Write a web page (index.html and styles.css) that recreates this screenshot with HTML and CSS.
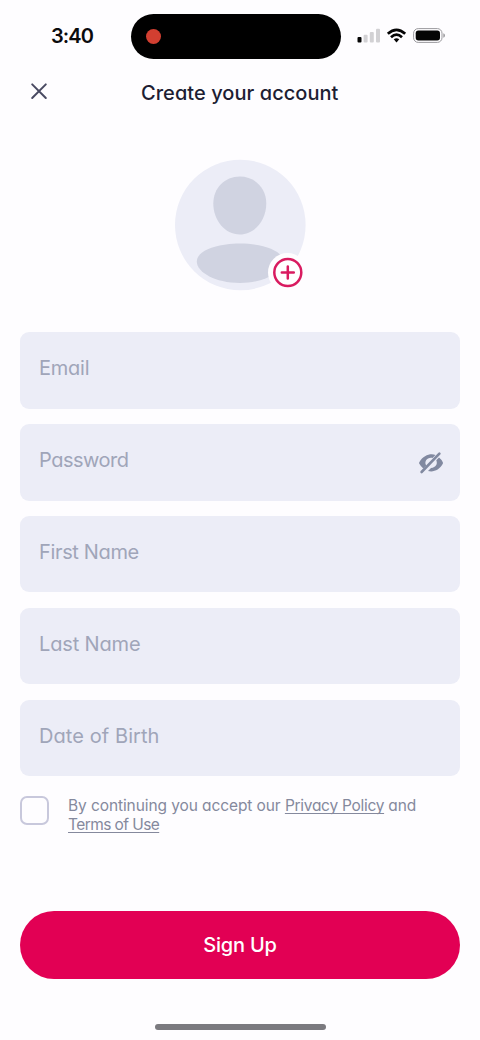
FILE: index.html
```html
<!DOCTYPE html>
<html lang="en">
<head>
<meta charset="utf-8">
<title>Create your account</title>
<link rel="stylesheet" href="styles.css">
</head>
<body>
<div class="screen">
  <div class="status">
    <div class="time"><span>3:40</span></div>
    <div class="island"><i class="rec"></i></div>
    <svg class="indicators" width="90" height="18" viewBox="0 0 90 18">
      <rect x="0.5" y="10" width="4" height="5.6" rx="1" fill="#050505"/>
      <g fill="#d2d1d4"><rect x="6.6" y="7.8" width="4" height="7.8" rx="1"/><rect x="12.8" y="5" width="4" height="10.6" rx="1"/><rect x="19" y="1.8" width="4" height="13.8" rx="1"/></g>
      <g fill="none" stroke="#050505" stroke-width="2.7">
        <path d="M30.8 6.8Q39.5-1.1 48.2 6.8"/>
        <path d="M34 10.2Q39.5 5.2 45 10.2"/>
      </g>
      <path d="M36.7 12.3Q39.5 10 42.3 12.3L39.5 15.5Z" fill="#050505"/>
      <rect x="56.6" y="1.6" width="28.4" height="13.8" rx="4.6" fill="none" stroke="#9b9a9e"/>
      <rect x="58.7" y="3.5" width="24.3" height="10" rx="2.7" fill="#050505"/>
      <path d="M86.3 6.2q1.7.6 1.7 2.3t-1.7 2.3z" fill="#9b9a9e"/>
    </svg>
  </div>

  <header class="header">
    <svg class="close" width="18" height="18" viewBox="0 0 18 18"><path d="M2.2 2.4 15.8 16M15.8 2.4 2.2 16" fill="none" stroke="#494a62" stroke-width="2" stroke-linecap="round"/></svg>
    <h1 class="title"><span>Create your account</span></h1>
  </header>

  <div class="avatar">
    <svg width="132" height="132" viewBox="0 0 132 132">
      <circle cx="66.3" cy="66" r="65.3" fill="#ecedf7"/>
      <path d="M65.800 17.500C80.800 17.500 92.300 29 92.300 44.500C92.300 61 80.800 75.500 65.800 75.500S39.300 61 39.300 44.500C39.300 29 50.800 17.500 65.800 17.500Z" fill="#d0d3e1"/>
      <path d="M22.800 102.500C22.800 92 42 84.500 66 84.500S109.500 92 109.500 103C109.500 112 91 124 66 124S22.800 113 22.800 102.500Z" fill="#d0d3e1"/>
      <circle cx="113.5" cy="113.500" r="19.500" fill="#fefdff"/>
      <circle cx="113.800" cy="113.500" r="13.500" fill="#fff" stroke="#d91b60" stroke-width="2.500"/>
      <path d="M107.800 113.500h12M113.800 107.500v12" stroke="#d91b60" stroke-width="2.500" stroke-linecap="round"/>
    </svg>
  </div>

  <form class="form">
    <div class="field"><span class="email">Email</span></div>
    <div class="field"><span class="password">Password</span>
      <svg class="eye" width="26" height="24" viewBox="0 0 26 24">
        <path d="M17.500 3.900C12 2.200 5.500 4.300 1.300 11.200q-.5.800 0 1.600 1.600 2.800 4 4.700L8.200 14.600C5.800 10.500 9.200 6 14.500 7Z" fill="#8189a0"/>
        <path d="M21 6.600q2.300 1.800 3.800 4.600.4.800 0 1.600C21.500 19 15.800 21.400 10 20l3-3C18 16.600 19.800 13 18.300 9.300Z" fill="#8189a0"/>
        <path d="M3.600 21 21.400 2.600" stroke="#8189a0" stroke-width="2.600" stroke-linecap="round"/>
      </svg>
    </div>
    <div class="field"><span class="first">First Name</span></div>
    <div class="field"><span class="last">Last Name</span></div>
    <div class="field"><span class="dob">Date of Birth</span></div>
  </form>

  <div class="consent">
    <i class="checkbox"></i>
    <p class="terms"><span class="lead">By continuing you accept our </span><a class="privacy">Privacy Policy</a><span class="and"> and</span><br><a class="tou">Terms of Use</a></p>
  </div>

  <div class="signup"><span>Sign Up</span></div>
  <div class="home"></div>
</div>
</body>
</html>
```
FILE: styles.css
```css
* { box-sizing: border-box; }
body { margin: 0; background: #fefdff; font-family: Inter, "Liberation Sans", sans-serif; font-feature-settings: "cv11" 1; }
.screen { width: 480px; height: 1040px; display: flex; flex-direction: column; overflow: hidden; }
.status { height: 59px; padding-top: 14px; display: grid; grid-template-columns: 131px 210px 1fr; }
.time { padding: 9px 0 0 51px; font-size: 20px; line-height: 26px; font-weight: 600; letter-spacing: -0.9px; color: #0b0b0d; }
.island { height: 45px; border-radius: 23px; background: #000; padding: 15px; }
.rec { display: block; width: 15px; height: 15px; border-radius: 50%; background: #d23f31; }
.indicators { margin: 13px 0 0 16px; }
.header { height: 100px; display: grid; grid-template-columns: 141px 1fr; align-items: start; }
.close { margin: 23px 0 0 30px; }
.title { margin: 20px 0 0; font-size: 20px; line-height: 28px; font-weight: 500; letter-spacing: 0.05px; color: #1d1e33; white-space: nowrap; }
.avatar { height: 173px; padding-left: 174px; }
.form { display: flex; flex-direction: column; gap: 15.2px; }
.field { margin: 0 20px; height: 76.7px; border-radius: 9px; background: #ecedf7; padding: 22.4px 16px 0 19px; display: flex; justify-content: space-between; align-items: flex-start; font-size: 20px; line-height: 28px; color: #a0a5b9; }
.email { letter-spacing: -0.25px; }
.password { letter-spacing: -0.5px; }
.first { letter-spacing: -0.35px; }
.last { letter-spacing: -0.15px; }
.dob { letter-spacing: 0.08px; }
.eye { margin-top: 5px; }
.consent { margin: 20px 20px 0; height: 114.500px; display: flex; gap: 19px; }
.checkbox { width: 29px; height: 29px; border: 2px solid #c8c8dc; border-radius: 7px; }
.terms { margin: 1px 0 0; font-size: 15.5px; line-height: 18.5px; color: #85899d; white-space: nowrap; }
.terms span { white-space: pre; }
.terms a { text-decoration: underline; text-decoration-thickness: 1px; text-underline-offset: 2px; text-decoration-skip-ink: none; }
.lead { letter-spacing: -0.09px; }
.privacy { letter-spacing: -0.28px; }
.and { letter-spacing: -0.1px; }
.tou { letter-spacing: -0.58px; }
.signup { margin: 0 20px; height: 68px; border-radius: 34px; background: #e20054; color: #fff; display: flex; align-items: center; justify-content: center; padding-top: 1px; font-size: 20px; font-weight: 500; letter-spacing: -0.2px; }
.home { margin: 45.500px 0 0 155px; width: 171px; height: 6px; border-radius: 3px; background: #7b7a7f; }
```
